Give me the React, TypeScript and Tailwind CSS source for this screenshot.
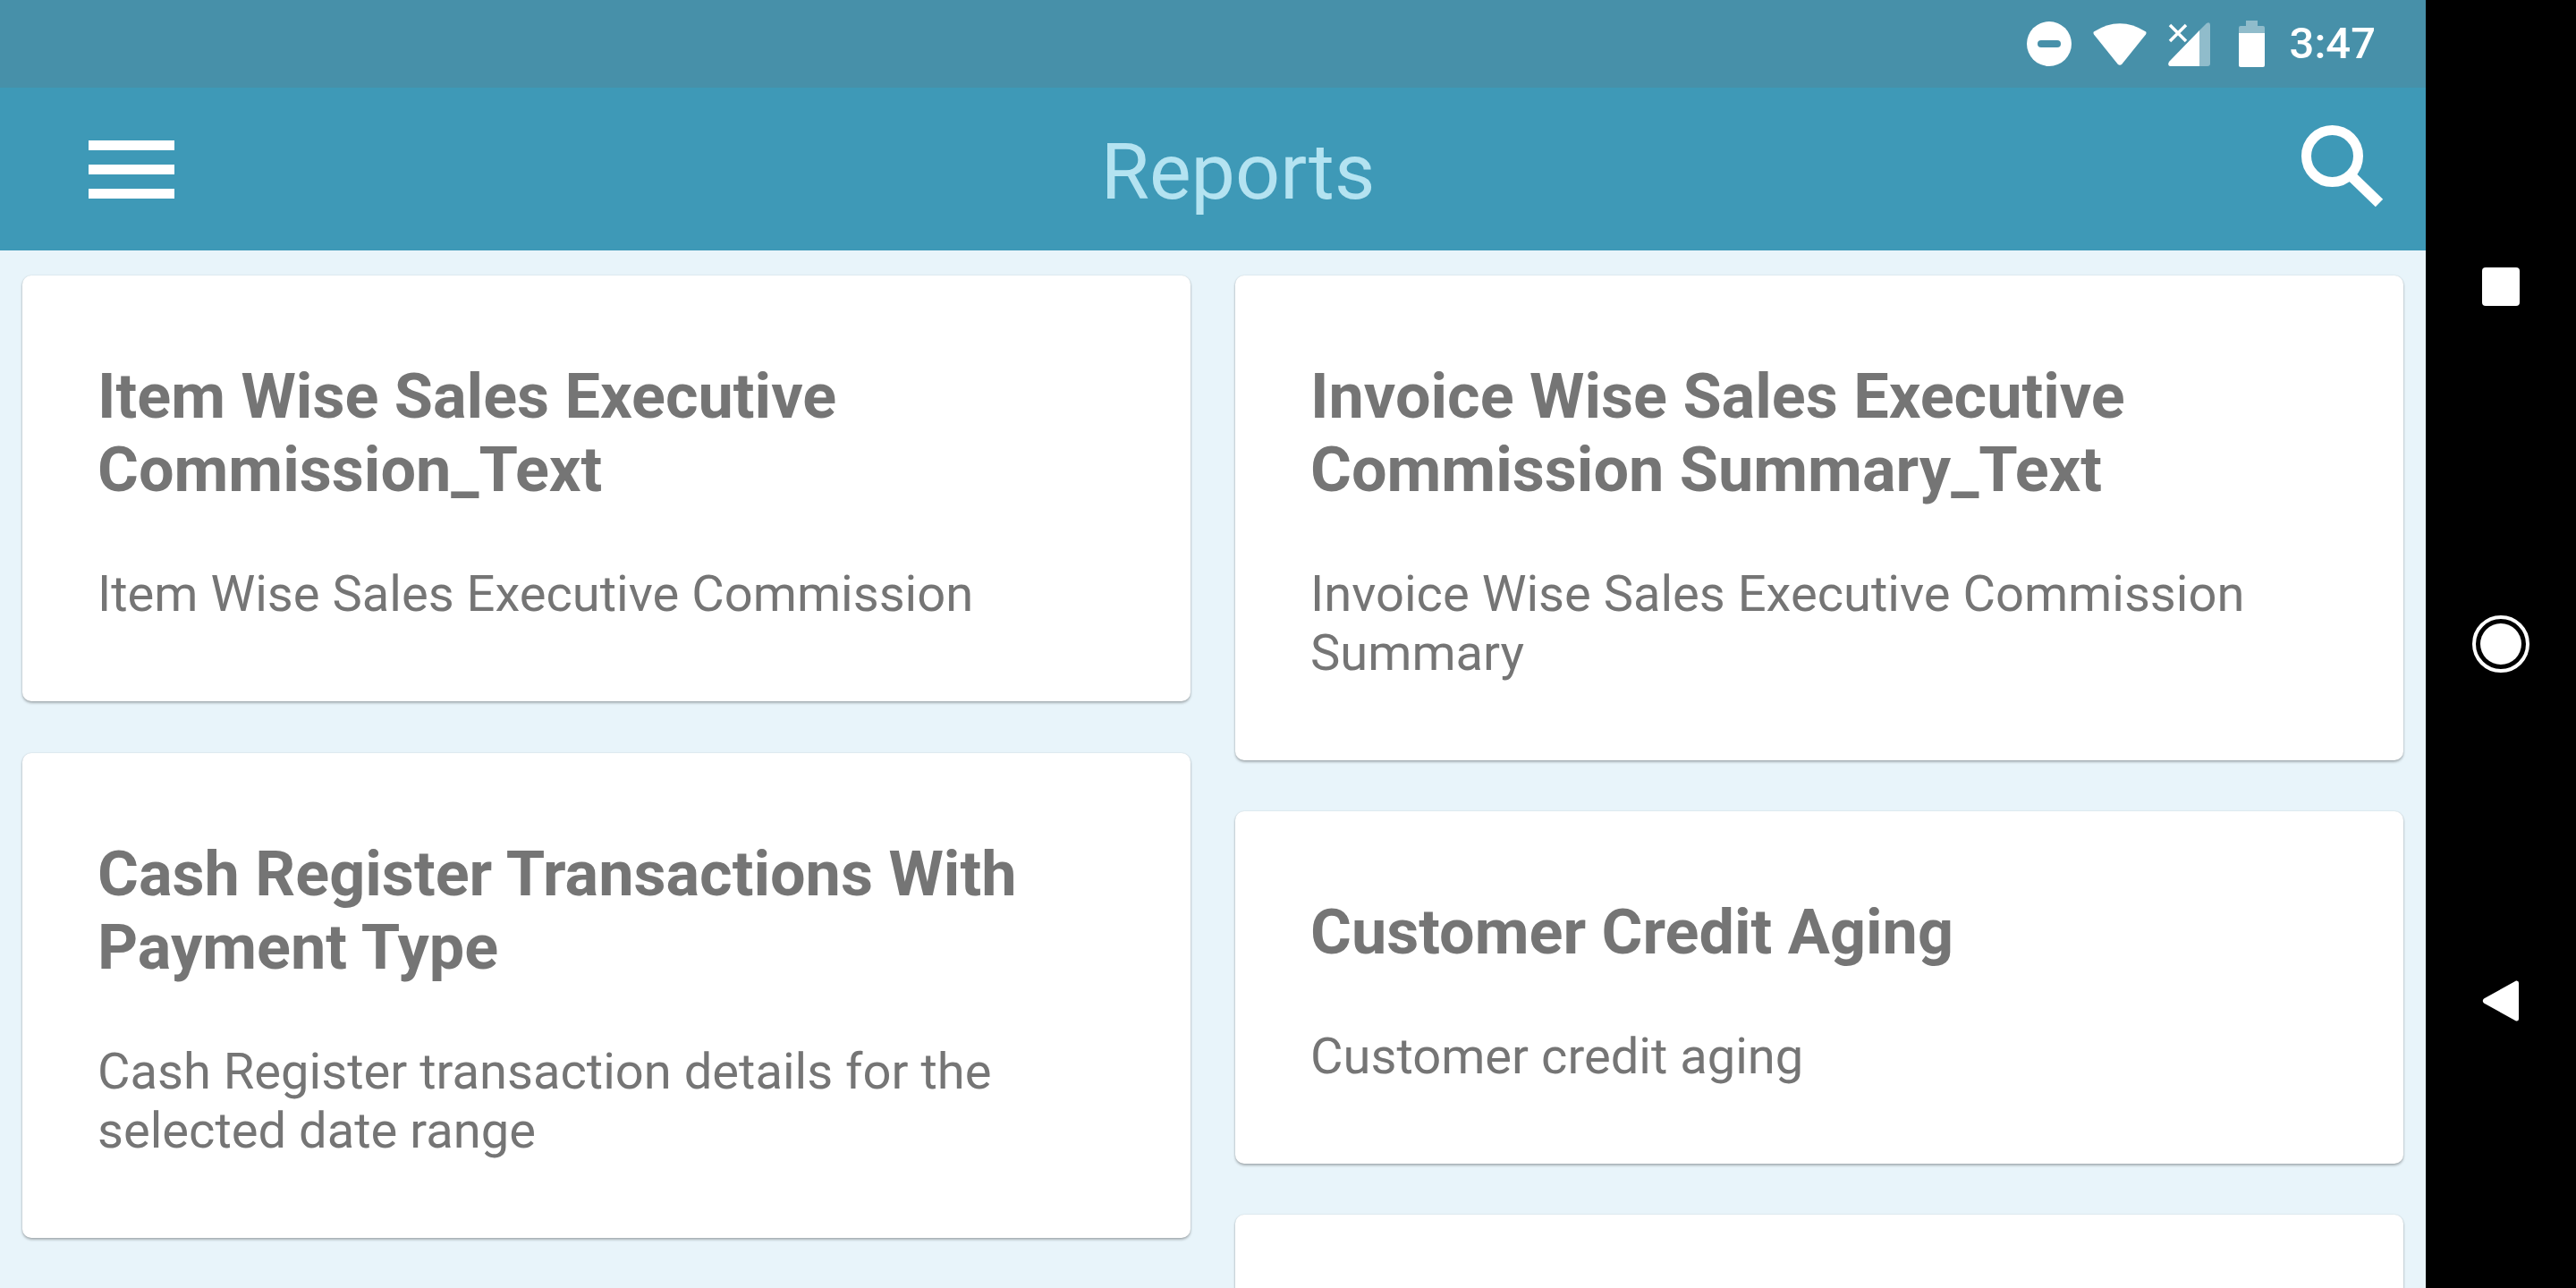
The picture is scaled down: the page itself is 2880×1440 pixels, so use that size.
const reportsLeft = [
  {
    title: 'Item Wise Sales Executive Commission_Text',
    description: 'Item Wise Sales Executive Commission',
  },
  {
    title: 'Cash Register Transactions With Payment Type',
    description: 'Cash Register transaction details for the selected date range',
  },
];

const reportsRight = [
  {
    title: 'Invoice Wise Sales Executive Commission Summary_Text',
    description: 'Invoice Wise Sales Executive Commission Summary',
  },
  {
    title: 'Customer Credit Aging',
    description: 'Customer credit aging',
  },
];

const cardShadow = 'shadow-[0_2px_3px_rgba(0,0,0,0.28),0_0_2px_rgba(0,0,0,0.12)]';

function ReportCard({ title, description }: { title: string; description: string }) {
  return (
    <div className={`shrink-0 rounded-[10px] bg-white px-[84px] pt-[94px] pb-[87px] ${cardShadow}`}>
      <h2 className="text-[70.2px] leading-[82px] font-bold text-[#757575]">{title}</h2>
      <p className="mt-[65px] text-[56.1px] leading-[66px] text-[#757575]">{description}</p>
    </div>
  );
}

function StatusIcons() {
  return (
    <div className="flex items-center justify-end h-[98px] pr-[56px] bg-[#4790a9]">
      <svg width="50" height="50" viewBox="0 0 50 50" className="mr-[24px]">
        <circle cx="25" cy="25" r="25" fill="#fff" />
        <rect x="12" y="21" width="26" height="8" rx="4" fill="#4790a9" />
      </svg>
      <svg width="60" height="50" viewBox="0 0 60 50" className="mr-[24px]">
        <path d="M0.8 11.5Q30 -7 59.2 11.5Q60 13 59 14.5L32.5 47.5Q30 50 27.5 47.5L1 14.5Q0 13 0.8 11.5Z" fill="#fff" />
      </svg>
      <svg width="48" height="50" viewBox="0 0 48 50" className="mr-[31px]">
        <path d="M43 2Q47 0 47 4V47Q47 50 44 50H35V10Z" fill="#fff" opacity="0.4" />
        <path d="M35 10V50H2Q-1 49 1 45Z" fill="#fff" />
        <path d="M2 4L20 22M20 4L2 22" stroke="#fff" strokeWidth="3.5" fill="none" />
      </svg>
      <svg width="29" height="52" viewBox="0 0 29 52" className="mr-[28px]">
        <path d="M8 0H21V6H27Q29 6 29 8V14H0V8Q0 6 2 6H8Z" fill="#fff" opacity="0.4" />
        <path d="M0 14H29V50Q29 52 27 52H2Q0 52 0 50Z" fill="#fff" />
      </svg>
      <span className="text-[49px] leading-[50px] font-medium text-white">3:47</span>
    </div>
  );
}

function Toolbar() {
  return (
    <div className="flex items-center h-[182px] pl-[99px] pr-[47px] bg-[#3e99b7]">
      <div className="flex flex-col gap-[16px] w-[96px]">
        <div className="h-[11px] bg-white" />
        <div className="h-[11px] bg-white" />
        <div className="h-[11px] bg-white" />
      </div>
      <div className="flex-1 pt-[6px] text-center text-[88px] leading-[100px] text-[#b4e3f1]">Reports</div>
      <svg width="92" height="92" viewBox="0 0 92 92" className="-mt-[6px]">
        <circle cx="34.5" cy="34.5" r="29" fill="none" stroke="#fff" strokeWidth="11" />
        <path d="M57 58L87 87" stroke="#fff" strokeWidth="12" fill="none" />
      </svg>
    </div>
  );
}

function NavBar() {
  return (
    <div className="flex flex-col items-center w-[168px] h-full pt-[299px] bg-black">
      <div className="w-[42px] h-[43px] rounded-[4px] bg-white" />
      <div className="flex items-center justify-center w-[64px] h-[64px] mt-[346px] rounded-full border-[4px] border-white">
        <div className="w-[46px] h-[46px] rounded-full bg-white" />
      </div>
      <svg width="42" height="46" viewBox="0 0 42 46" className="mt-[344px]">
        <path d="M38 0.5Q41 0 41 3V43Q41 46 38 45.5L2 25.5Q-0.5 23 2 20.5Z" fill="#fff" />
      </svg>
    </div>
  );
}

export default function App() {
  return (
    <div className="flex w-[2880px] h-[1440px] overflow-hidden font-['Roboto',sans-serif]">
      <div className="flex flex-col w-[2712px] h-full bg-[#e8f4fa]">
        <StatusIcons />
        <Toolbar />
        <div className="flex flex-1 gap-[50px] min-h-0 overflow-hidden pt-[28px] px-[25px]">
          <div className="flex flex-col gap-[58px] w-[1306px]">
            {reportsLeft.map((r) => (
              <ReportCard key={r.title} title={r.title} description={r.description} />
            ))}
          </div>
          <div className="flex flex-col gap-[57px] w-[1306px]">
            {reportsRight.map((r) => (
              <ReportCard key={r.title} title={r.title} description={r.description} />
            ))}
            <div className={`shrink-0 h-[395px] rounded-[10px] bg-white ${cardShadow}`} />
          </div>
        </div>
      </div>
      <NavBar />
    </div>
  );
}
